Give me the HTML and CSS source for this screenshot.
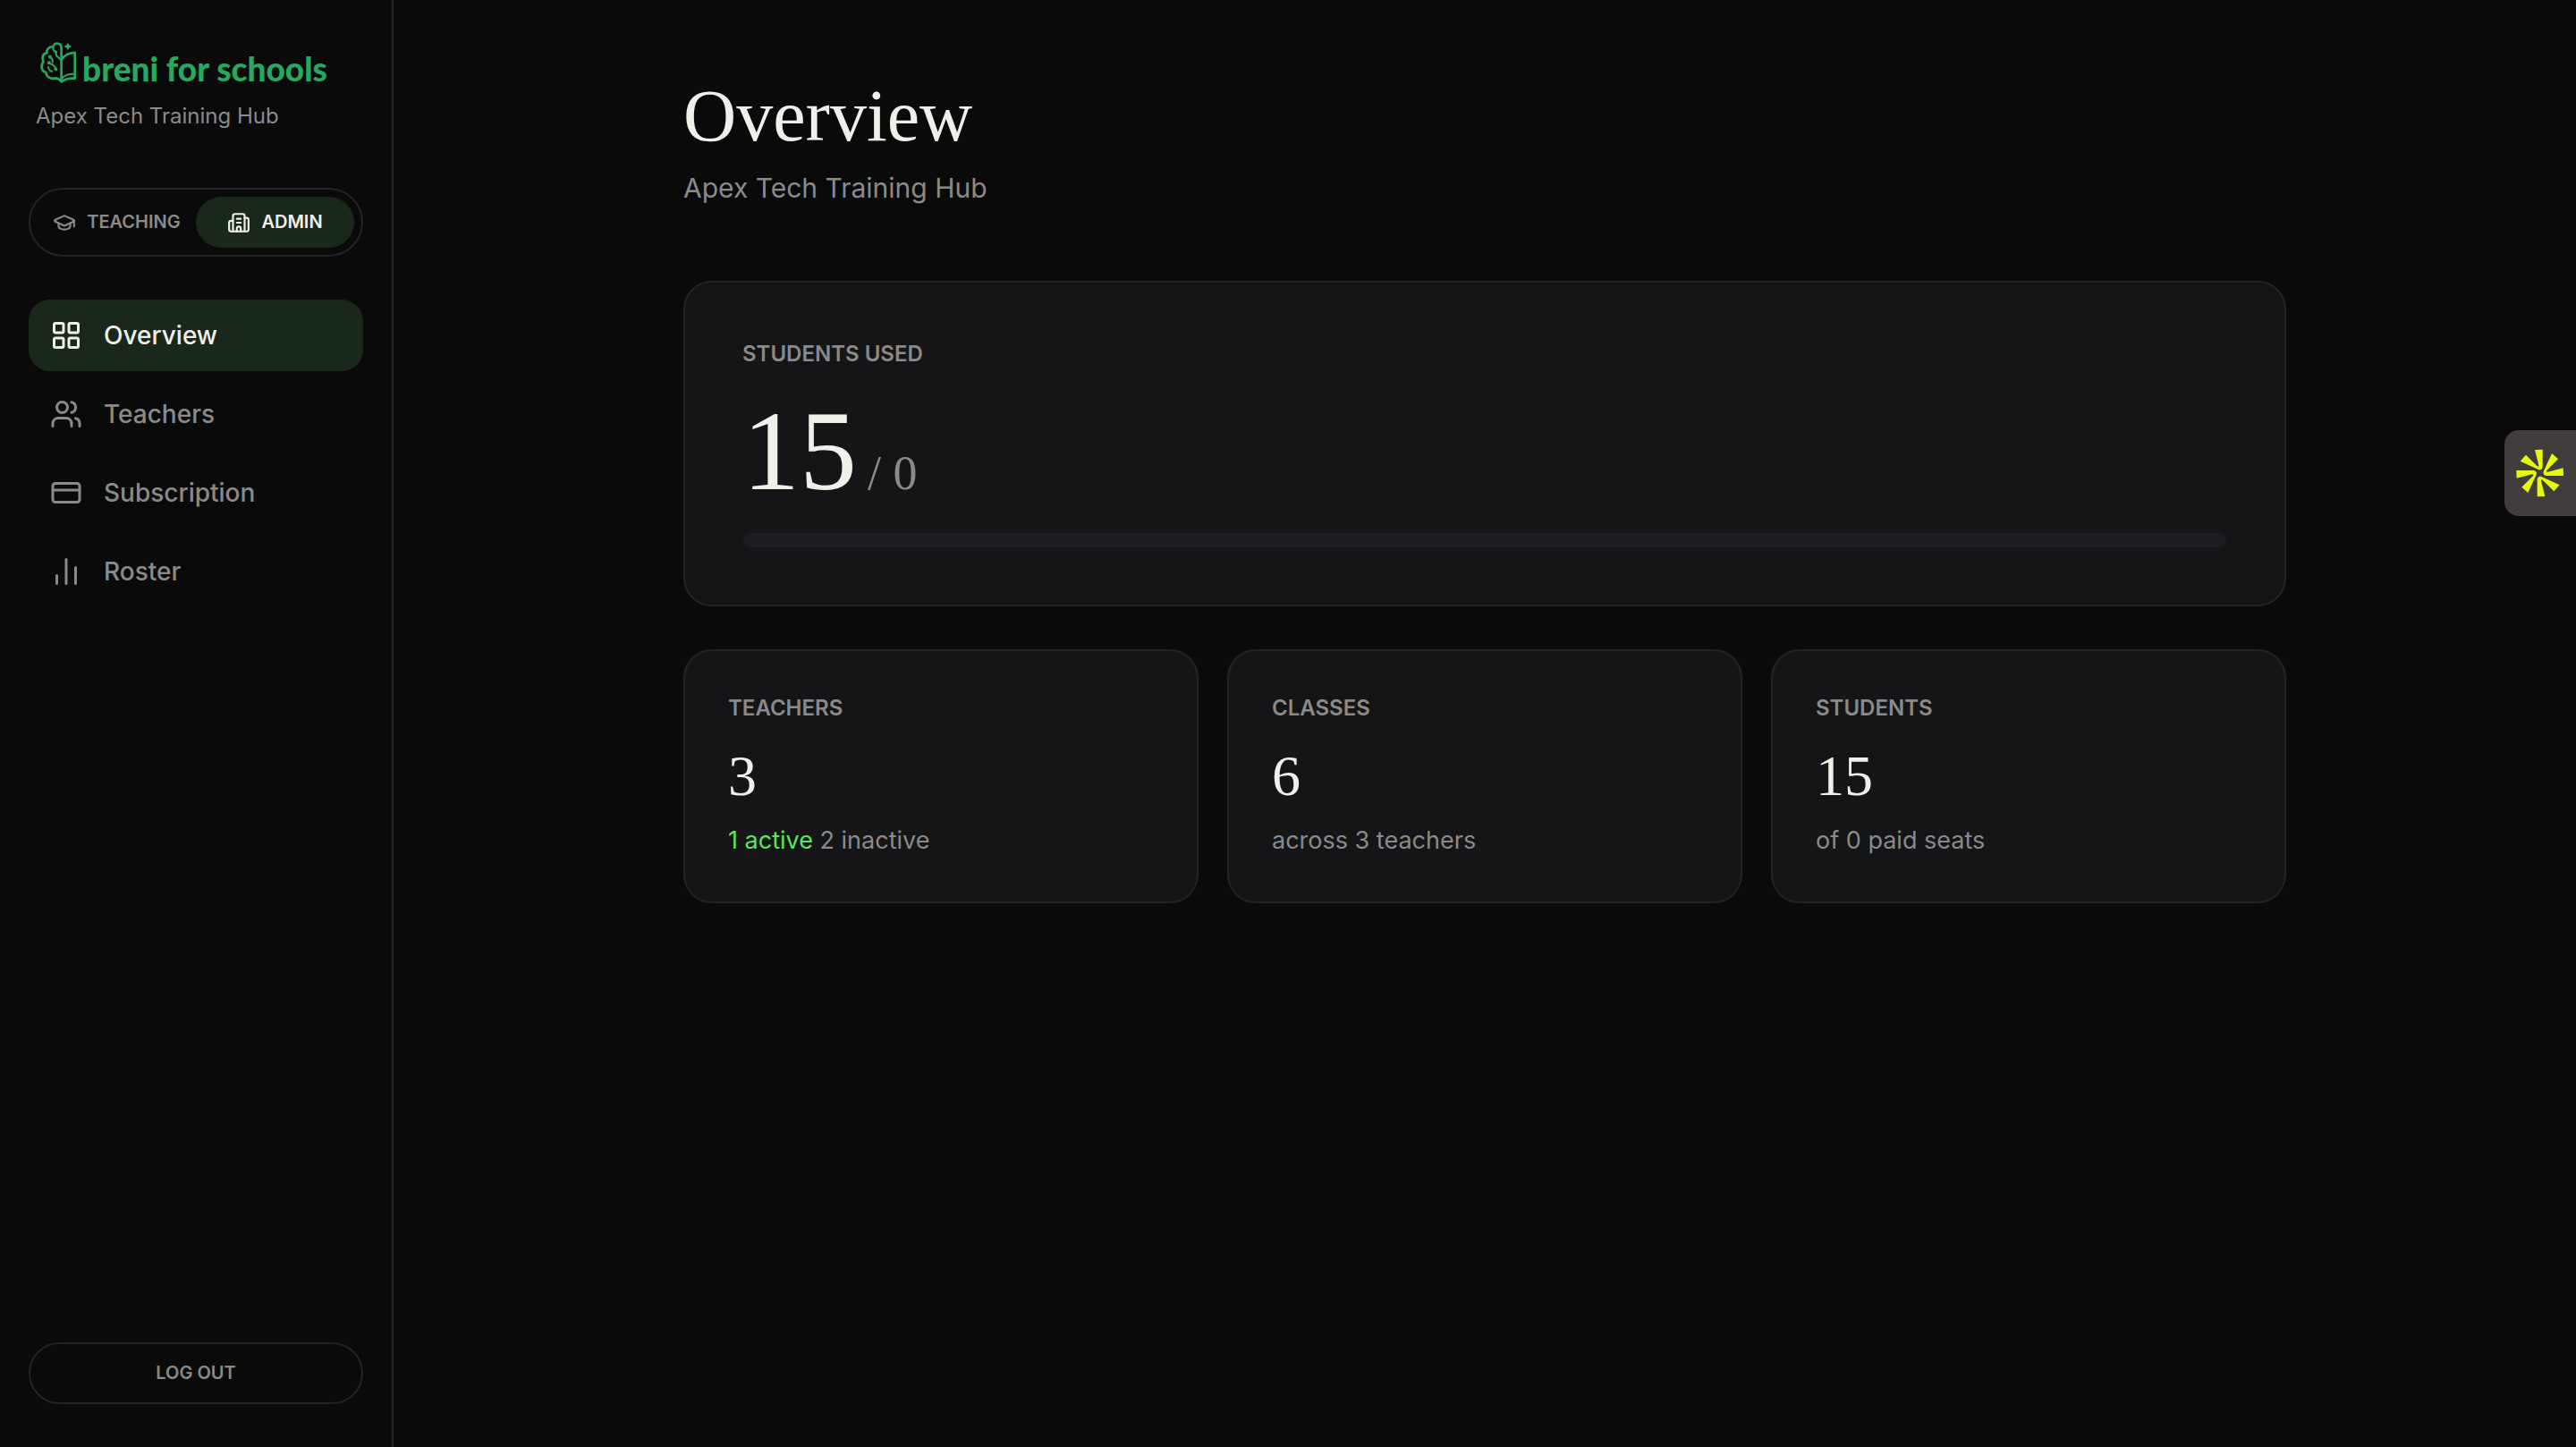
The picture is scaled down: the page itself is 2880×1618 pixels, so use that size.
FILE: index.html
```html
<!DOCTYPE html>
<html lang="en">
  <head>
    <meta charset="UTF-8" />
    <meta name="viewport" content="width=device-width, initial-scale=1.0" />
    <title>Overview - breni for schools</title>
    <link rel="stylesheet" href="styles.css">
  </head>
  <body>
    <div class="layout">
      <aside class="sidebar">
        <div class="brand">
          <a href="#" class="logo">
            <svg class="logo-icon" viewBox="132 78 128 146" fill="none" stroke="currentColor" stroke-width="8" stroke-linecap="round" stroke-linejoin="round">
              <path d="M207 212V102C207 82 181 80 180 97C165 95 155 107 158 118C143 120 139 137 146 148C136 158 138 181 154 184C156 200 172 209 186 204C195 204 202 210 207 215" />
              <path d="M207 142C216 126 235 117 253 117V205C235 204 218 208 207 216" />
              <path d="M207 206C216 195 234 189 253 190" stroke-width="6" />
              <path d="M180 97C177 104 180 110 188 114L190 128C197 132 200 137 206 142M168 132L177 140V150M164 152L180 160C186 166 188 168 188 174M162 166C164 176 168 180 175 181" stroke-width="6" />
              <g fill="currentColor" stroke="none">
                <circle cx="168" cy="131" r="6" />
                <circle cx="188" cy="115" r="5" />
                <circle cx="165" cy="152" r="6" />
                <circle cx="188" cy="173" r="6" />
                <path d="M229 83Q232 93 242 96Q232 99 229 109Q226 99 216 96Q226 93 229 83Z" />
              </g>
            </svg>
            <span class="logo-text">breni for schools</span>
          </a>
          <p class="school-name">Apex Tech Training Hub</p>
        </div>

        <div class="mode-switch">
          <button class="mode-btn">
            <svg class="mode-icon" viewBox="0 0 24 24">
              <path d="M21.42 10.922a1 1 0 0 0-.019-1.838L12.83 5.18a2 2 0 0 0-1.66 0L2.6 9.08a1 1 0 0 0 0 1.832l8.57 3.908a2 2 0 0 0 1.66 0z" />
              <path d="M22 10v6" />
              <path d="M6 12.5V16a6 3 0 0 0 12 0v-3.5" />
            </svg>
            TEACHING
          </button>
          <button class="mode-btn active">
            <svg class="mode-icon" viewBox="0 0 24 24">
              <path d="M10 12h4M10 8h4" />
              <path d="M14 21v-3a2 2 0 0 0-4 0v3" />
              <path d="M6 10H4a2 2 0 0 0-2 2v7a2 2 0 0 0 2 2h16a2 2 0 0 0 2-2V9a2 2 0 0 0-2-2h-2" />
              <path d="M6 21V5a2 2 0 0 1 2-2h8a2 2 0 0 1 2 2v16" />
            </svg>
            ADMIN
          </button>
        </div>

        <nav class="nav">
          <a href="#" class="nav-link active">
            <svg class="nav-icon" viewBox="0 0 24 24">
              <rect x="3" y="3" width="7" height="7" rx="1" />
              <rect x="14" y="3" width="7" height="7" rx="1" />
              <rect x="14" y="14" width="7" height="7" rx="1" />
              <rect x="3" y="14" width="7" height="7" rx="1" />
            </svg>
            Overview
          </a>
          <a href="#" class="nav-link">
            <svg class="nav-icon" viewBox="0 0 24 24">
              <path d="M16 21v-2a4 4 0 0 0-4-4H6a4 4 0 0 0-4 4v2" />
              <circle cx="9" cy="7" r="4" />
              <path d="M22 21v-2a4 4 0 0 0-3-3.87" />
              <path d="M16 3.13a4 4 0 0 1 0 7.75" />
            </svg>
            Teachers
          </a>
          <a href="#" class="nav-link">
            <svg class="nav-icon" viewBox="0 0 24 24">
              <rect x="2" y="5" width="20" height="14" rx="2" />
              <path d="M2 10h20" />
            </svg>
            Subscription
          </a>
          <a href="#" class="nav-link">
            <svg class="nav-icon" viewBox="0 0 24 24">
              <path d="M5 21v-6M12 21V3M19 21V9" />
            </svg>
            Roster
          </a>
        </nav>

        <button class="logout-btn">LOG OUT</button>
      </aside>

      <main class="main">
        <div class="content">
          <header class="page-header">
            <h1>Overview</h1>
            <p>Apex Tech Training Hub</p>
          </header>

          <section class="card usage-card">
            <h2 class="label">STUDENTS USED</h2>
            <p class="usage">15<span class="usage-total">/ 0</span></p>
            <div class="bar" role="progressbar" aria-label="Students used"></div>
          </section>

          <div class="stats">
            <section class="card stat-card">
              <h2 class="label">TEACHERS</h2>
              <p class="stat">3</p>
              <p class="note"><span class="green">1 active</span> 2 inactive</p>
            </section>
            <section class="card stat-card">
              <h2 class="label">CLASSES</h2>
              <p class="stat">6</p>
              <p class="note">across 3 teachers</p>
            </section>
            <section class="card stat-card">
              <h2 class="label">STUDENTS</h2>
              <p class="stat">15</p>
              <p class="note">of 0 paid seats</p>
            </section>
          </div>
        </div>
      </main>
    </div>

    <!-- floating tab on the right edge -->
    <button class="side-tab" aria-label="Open panel">
      <svg class="side-tab-icon" viewBox="0 0 192 192" fill="currentColor">
        <defs>
          <path id="ray" d="M78 18L104 17V74Q103 87 90 84L29 56L48 35L86 73Q91 77 91 70Z" />
        </defs>
        <use href="#ray" />
        <use href="#ray" transform="rotate(90 95 96)" />
        <use href="#ray" transform="rotate(180 95 96)" />
        <use href="#ray" transform="rotate(270 95 96)" />
      </svg>
    </button>
  </body>
</html>
```
FILE: styles.css
```css
* {
  margin: 0;
  padding: 0;
  box-sizing: border-box;
}

body {
  background-color: #0a0a0a;
  color: #f0f0ea;
  font-family: Inter, sans-serif;
}

button {
  border: none;
  background: none;
  font-family: inherit;
  cursor: pointer;
}

a {
  text-decoration: none;
}

.layout {
  display: flex;
  min-height: 100vh;
}

/* sidebar */
.sidebar {
  width: 440px;
  flex-shrink: 0;
  display: flex;
  flex-direction: column;
  padding: 46px 32px 48px;
  border-right: 2px solid #242427;
}

.brand {
  padding: 0 8px;
  margin-bottom: 64px;
}

.logo {
  display: flex;
  align-items: flex-end;
  gap: 6px;
  padding-left: 4px;
  color: #27a85f;
}

.logo-icon {
  width: 42px;
  height: 48px;
}

.logo-text {
  font-family: Lato, sans-serif;
  font-size: 37px;
  font-weight: 900;
  line-height: 34px;
}

.school-name {
  margin-top: 20px;
  font-size: 24px;
  line-height: 32px;
  color: #8a8a8a;
}

.mode-switch {
  display: flex;
  padding: 8px;
  margin-bottom: 48px;
  border: 2px solid #242427;
  border-radius: 40px;
}

.mode-btn {
  flex: 1;
  display: flex;
  align-items: center;
  justify-content: center;
  gap: 12px;
  padding: 12px 0;
  border-radius: 30px;
  font-size: 20px;
  font-weight: 600;
  line-height: 33px;
  color: #8a8a8a;
}

.mode-icon,
.nav-icon {
  flex-shrink: 0;
  fill: none;
  stroke: currentColor;
  stroke-width: 2;
  stroke-linecap: round;
  stroke-linejoin: round;
}

.mode-icon {
  width: 26px;
  height: 26px;
}

.mode-btn.active,
.nav-link.active {
  background-color: #1a281c;
  color: #f0f0ea;
}

.nav {
  display: flex;
  flex-direction: column;
  gap: 8px;
}

.nav-link {
  display: flex;
  align-items: center;
  gap: 24px;
  padding: 20px 24px;
  border-radius: 24px;
  font-size: 28px;
  font-weight: 500;
  line-height: 40px;
  color: #8a8a8a;
}

.nav-icon {
  width: 36px;
  height: 36px;
}

.logout-btn {
  margin-top: auto;
  padding: 16px;
  border: 2px solid #242427;
  border-radius: 36px;
  font-size: 20px;
  font-weight: 600;
  line-height: 33px;
  color: #8a8a8a;
}

/* main */
.main {
  flex: 1;
  min-width: 0;
}

.content {
  max-width: 1920px;
  margin: 0 auto;
  padding: 80px 64px;
}

.page-header {
  margin-bottom: 80px;
}

.page-header h1 {
  font-family: "Liberation Serif", serif;
  font-size: 82px;
  font-weight: 400;
  line-height: 100px;
}

.page-header p {
  margin-top: 6px;
  font-size: 30px;
  line-height: 48px;
  color: #8a8a8a;
}

.card {
  display: flex;
  flex-direction: column;
  background-color: #151517;
  border: 2px solid #242427;
  border-radius: 32px;
}

.usage-card {
  gap: 28px;
  padding: 64px;
  margin-bottom: 48px;
}

.label {
  font-size: 24px;
  font-weight: 600;
  line-height: 32px;
  color: #8a8a8a;
}

.usage {
  font-family: "Liberation Serif", serif;
  font-size: 128px;
  line-height: 128px;
}

.usage-total {
  margin-left: 12px;
  font-size: 54px;
  line-height: 54px;
  color: #8a8a8a;
}

.bar {
  height: 16px;
  border-radius: 8px;
  background-color: #1d1d21;
}

.stats {
  display: grid;
  grid-template-columns: repeat(3, 1fr);
  gap: 32px;
}

.stat-card {
  padding: 48px;
}

.stat {
  margin-top: 28px;
  font-family: "Liberation Serif", serif;
  font-size: 64px;
  line-height: 64px;
}

.note {
  margin-top: 20px;
  font-size: 27px;
  line-height: 40px;
  color: #8a8a8a;
}

.green {
  color: #5ce65c;
}

.side-tab {
  position: fixed;
  top: 481px;
  right: 0;
  padding: 16px 8px;
  border-radius: 16px 0 0 16px;
  background-color: #413d3d;
  color: #e6fa0a;
}

.side-tab-icon {
  display: block;
  width: 64px;
  height: 64px;
}
```
